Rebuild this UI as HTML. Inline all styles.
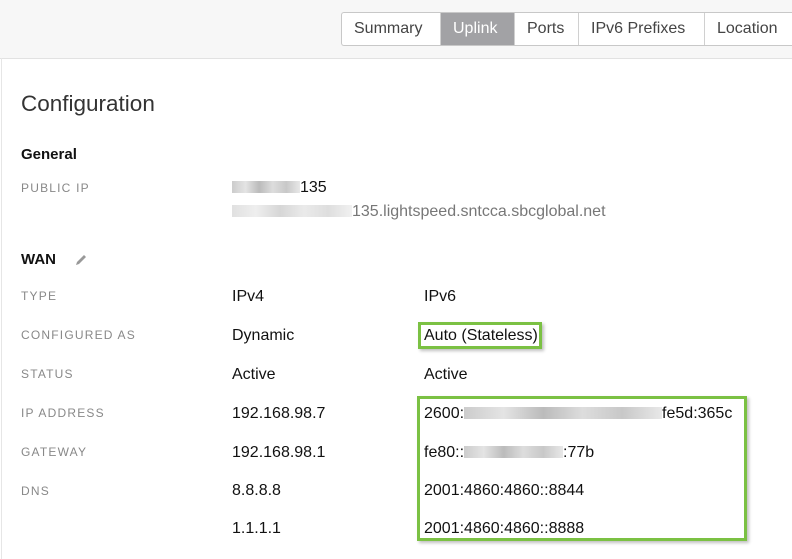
<!DOCTYPE html>
<html><head><meta charset="utf-8"><style>
body{margin:0;width:792px;height:559px;background:#fff;font-family:"Liberation Sans",Arial,sans-serif;position:relative;overflow:hidden;color:#222}
.hdr{position:absolute;left:0;top:0;width:792px;height:58px;background:#f7f7f7;border-bottom:1px solid #e2e2e2}
.lb{position:absolute;left:1px;top:58px;width:1px;height:501px;background:#e6e6e6}
.tabs{position:absolute;left:341px;top:12px;height:32px;display:flex;border:1px solid #c8c8c8;border-radius:3px 0 0 3px;background:#fff;border-right:none}
.tabs div{font-size:16px;line-height:32px;padding:0 12px;border-right:1px solid #d0d0d0;color:#444}
.tabs .on{background:#a2a2a5;color:#fff}
.t{position:absolute;white-space:nowrap}
.h1{left:21px;top:91px;font-size:22.5px;color:#333}
.h2{font-size:15px;font-weight:bold;color:#111}
.lab{left:21px;font-size:12px;color:#888;letter-spacing:1.2px}
.v{font-size:16px;color:#111}
.bl{display:inline-block;height:12px;background:linear-gradient(90deg,#ccc,#e4e4e4,#bbb,#ddd,#c8c8c8,#e8e8e8);vertical-align:-1px}
.g{position:absolute;border:3px solid #7bc143;box-shadow:2px 2px 3px rgba(0,0,0,.25)}
</style></head><body>
<div class="hdr"></div><div class="lb"></div>
<div class="tabs"><div style="width:74px">Summary</div><div class="on" style="width:49px">Uplink</div><div style="width:39px">Ports</div><div style="width:101px">IPv6 Prefixes</div><div style="width:72px;border-right:none">Location</div></div>
<div class="t h1">Configuration</div>
<div class="t h2" style="left:21px;top:146px">General</div>
<div class="t lab" style="top:181px">PUBLIC IP</div>
<div class="t v" style="left:232px;top:179px"><span class="bl" style="width:68px"></span>135</div>
<div class="t v" style="left:232px;top:203px;color:#777"><span class="bl" style="width:120px;opacity:.6"></span>135.lightspeed.sntcca.sbcglobal.net</div>
<div class="t h2" style="left:21px;top:251px">WAN</div>
<svg class="t" style="left:74px;top:253px" width="14" height="14" viewBox="0 0 14 14"><path d="M2 12 L3 9 L10 2 L12 4 L5 11 Z" fill="#999"/></svg>
<div class="t lab" style="top:289px">TYPE</div>
<div class="t v" style="left:232px;top:288px">IPv4</div><div class="t v" style="left:424px;top:288px">IPv6</div>
<div class="t lab" style="top:328px">CONFIGURED AS</div>
<div class="t v" style="left:232px;top:327px">Dynamic</div><div class="t v" style="left:424px;top:327px">Auto (Stateless)</div>
<div class="t lab" style="top:367px">STATUS</div>
<div class="t v" style="left:232px;top:366px">Active</div><div class="t v" style="left:424px;top:366px">Active</div>
<div class="t lab" style="top:406px">IP ADDRESS</div>
<div class="t v" style="left:232px;top:405px">192.168.98.7</div><div class="t v" style="left:424px;top:405px">2600:<span class="bl" style="width:198px"></span>fe5d:365c</div>
<div class="t lab" style="top:445px">GATEWAY</div>
<div class="t v" style="left:232px;top:444px">192.168.98.1</div><div class="t v" style="left:424px;top:444px">fe80::<span class="bl" style="width:99px"></span>:77b</div>
<div class="t lab" style="top:484px">DNS</div>
<div class="t v" style="left:232px;top:482px">8.8.8.8</div><div class="t v" style="left:424px;top:482px">2001:4860:4860::8844</div>
<div class="t v" style="left:232px;top:520px">1.1.1.1</div><div class="t v" style="left:424px;top:520px">2001:4860:4860::8888</div>
<div class="g" style="left:418px;top:322px;width:118px;height:21px"></div>
<div class="g" style="left:417px;top:396px;width:324px;height:139px"></div>
</body></html>
